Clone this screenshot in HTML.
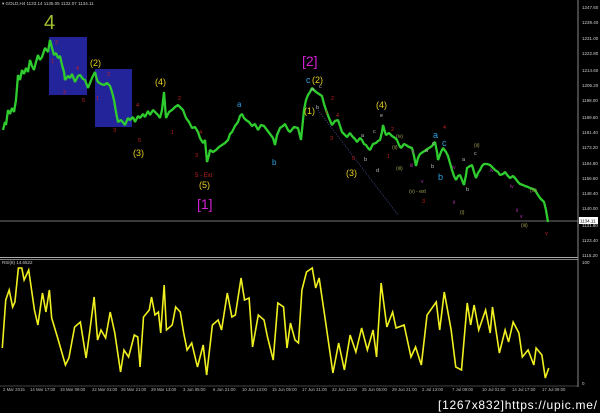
<!DOCTYPE html>
<html><head><meta charset="utf-8"><style>
html,body{margin:0;padding:0;background:#000;width:600px;height:413px;overflow:hidden}
svg{display:block}
text{font-family:"Liberation Sans",sans-serif}
</style></head><body>
<svg width="600" height="413" viewBox="0 0 600 413" xmlns="http://www.w3.org/2000/svg">
<rect width="600" height="413" fill="#000"/>
<rect x="49" y="37" width="38" height="58" fill="#23239a"/>
<rect x="95" y="69" width="37" height="58" fill="#23239a"/>
<line x1="578" y1="0" x2="578" y2="387" stroke="#aaa" stroke-width="0.8"/>
<line x1="0" y1="221" x2="578" y2="221" stroke="#999" stroke-width="0.8"/>
<line x1="0" y1="257.5" x2="578" y2="257.5" stroke="#aaa" stroke-width="1"/>
<line x1="0" y1="259.5" x2="578" y2="259.5" stroke="#aaa" stroke-width="0.8"/>
<line x1="0" y1="386" x2="578" y2="386" stroke="#888" stroke-width="0.6"/>
<g font-size="4.5" fill="#ccc">
<text x="2" y="5">▾ GOLD,H4  1133.14 1135.05 1132.07 1134.11</text>
<text x="582" y="9">1247.60</text><text x="582" y="24">1239.40</text><text x="582" y="40">1231.00</text>
<text x="582" y="55">1222.80</text><text x="582" y="72">1214.60</text><text x="582" y="87">1206.20</text>
<text x="582" y="102">1198.00</text><text x="582" y="119">1189.60</text><text x="582" y="134">1181.40</text>
<text x="582" y="149">1173.20</text><text x="582" y="165">1164.80</text><text x="582" y="180">1156.60</text>
<text x="582" y="195">1148.40</text><text x="582" y="210">1140.00</text><text x="582" y="227">1131.80</text>
<text x="582" y="242">1123.40</text><text x="582" y="257">1115.20</text>
<text x="582" y="264">100</text><text x="582" y="385">0</text>
<text x="2" y="264">RSI(8) 14.6522</text>
</g>
<rect x="579" y="217" width="19" height="7" fill="#fff"/>
<text x="580" y="222.5" font-size="4.5" fill="#000">1134.11</text>
<line x1="318" y1="110" x2="398" y2="215" stroke="#4a5aa0" stroke-width="0.8" stroke-dasharray="1,1.5"/>
<polyline fill="none" stroke="#2ecc2e" stroke-width="2.3" stroke-linejoin="bevel" points="3,130 5,122 6,125 8,110 10,114 12,108 14,112 16,100 18,75 20,80 22,70 24,74 26,68 28,72 30,60 32,66 34,70 36,62 38,55 40,60 42,57 45,48 48,52 50,40 52,48 54,55 56,53 58,58 60,56 62,65 64,72 65,80 68,76 70,78 72,74 75,82 78,76 80,75 83,79 85,80 88,88 92,78 95,72 97,80 98,82 101,84 104,85 107,83 110,86 112,92 114,100 116,112 118,122 121,120 125,125 128,118 130,120 133,117 135,122 138,116 140,118 143,114 145,117 148,111 150,115 153,110 155,112 158,115 160,118 162,110 164,92 165,105 166,118 169,112 172,110 175,107 178,105 181,108 183,110 186,118 189,122 192,128 195,127 198,132 200,138 203,143 205,140 207,162 209,155 210,150 213,152 216,150 219,147 222,145 225,143 228,140 230,134 232,132 235,126 238,122 240,116 242,114 244,118 246,120 249,122 252,126 255,124 258,130 261,125 264,126 267,130 270,134 273,138 275,145 277,135 280,128 283,126 285,124 288,130 290,132 294,127 298,128 300,136 301,140 303,120 304,110 306,100 308,95 310,92 312,88 314,90 316,92 319,94 322,96 324,104 326,110 329,118 332,125 335,121 338,120 340,126 342,132 345,135 347,137 350,133 352,136 355,139 357,142 360,138 362,140 364,144 366,145 368,148 370,150 373,144 376,143 378,141 380,140 382,132 383,125 385,132 386,135 389,133 392,136 395,138 397,140 399,145 401,148 404,144 406,145 409,147 412,148 414,156 416,166 418,158 420,154 423,152 426,150 429,148 432,146 434,143 435,142 437,152 438,160 441,152 443,148 446,152 448,156 450,163 452,170 454,176 456,180 458,176 460,175 462,180 464,185 466,175 467,168 470,166 472,165 474,172 476,178 478,173 480,170 482,166 484,164 487,164 490,165 493,168 495,170 498,172 500,175 503,174 505,172 508,176 510,178 513,176 515,178 518,182 520,184 523,185 525,186 528,187 530,188 533,189 535,190 538,195 540,198 542,200 544,202 546,210 548,222"/>
<g font-family="Liberation Sans,sans-serif">
<text x="44" y="29" font-size="20" fill="#a0c030">4</text>
<text x="90" y="66" font-size="9" fill="#e8d020">(2)</text>
<text x="155" y="85" font-size="9" fill="#e8d020">(4)</text>
<text x="133" y="156" font-size="9" fill="#e8d020">(3)</text>
<text x="199" y="188" font-size="9" fill="#e8d020">(5)</text>
<text x="195" y="177" font-size="6" fill="#c02020">5 - Ext</text>
<text x="197" y="209" font-size="14" fill="#d020d0">[1]</text>
<text x="237" y="107" font-size="8" fill="#30a0e0">a</text>
<text x="272" y="165" font-size="8" fill="#30a0e0">b</text>
<text x="302" y="66" font-size="14" fill="#d020d0">[2]</text>
<text x="306" y="83" font-size="9" fill="#30a0e0">c</text>
<text x="312" y="83" font-size="9" fill="#e8d020">(2)</text>
<text x="304" y="114" font-size="9" fill="#e8d020">(1)</text>
<text x="376" y="108" font-size="9" fill="#e8d020">(4)</text>
<text x="346" y="176" font-size="9" fill="#e8d020">(3)</text>
<text x="433" y="138" font-size="9" fill="#30a0e0">a</text>
<text x="442" y="146" font-size="9" fill="#30a0e0">c</text>
<text x="438" y="180" font-size="9" fill="#30a0e0">b</text>
<g font-size="5.5" fill="#c02020">
<text x="55" y="44">2</text><text x="51" y="63">1</text><text x="76" y="70">4</text><text x="63" y="94">3</text><text x="82" y="102">5</text>
<text x="107" y="76">2</text><text x="96" y="100">1</text><text x="113" y="132">3</text><text x="136" y="107">4</text><text x="138" y="142">5</text>
<text x="178" y="100">2</text><text x="171" y="134">1</text><text x="199" y="134">4</text><text x="195" y="157">3</text>
<text x="331" y="100">2</text><text x="325" y="114">1</text><text x="336" y="117">4</text><text x="330" y="140">3</text><text x="352" y="160">5</text>
<text x="391" y="131">2</text><text x="387" y="158">1</text><text x="422" y="203">3</text><text x="443" y="129">4</text><text x="545" y="235">v</text>
</g>
<g font-size="5.5" fill="#bbb">
<text x="311" y="91">a</text><text x="319" y="88">c</text><text x="316" y="109">b</text><text x="361" y="137">a</text><text x="373" y="133">c</text>
<text x="364" y="161">b</text><text x="376" y="172">d</text><text x="380" y="117">e</text><text x="425" y="152">a</text><text x="432" y="145">c</text>
<text x="431" y="168">b</text><text x="462" y="161">a</text><text x="474" y="155">c</text><text x="466" y="191">b</text>
</g>
<g font-size="5" fill="#a0a050">
<text x="396" y="138">(iv)</text><text x="392" y="149">(ii)</text><text x="396" y="170">(iii)</text><text x="409" y="193">(v) - ext</text>
<text x="474" y="147">(ii)</text><text x="460" y="214">(i)</text><text x="521" y="227">(iii)</text><text x="530" y="192">(iv)</text>
</g>
<g font-size="5" fill="#b030b0">
<text x="412" y="153">v</text><text x="410" y="167">iii</text><text x="421" y="183">v</text><text x="452" y="169">iv</text><text x="453" y="204">ii</text>
<text x="490" y="172">iv</text><text x="510" y="188">iv</text><text x="516" y="212">ii</text><text x="520" y="218">v</text>
</g>
</g>
<polyline fill="none" stroke="#f0f020" stroke-width="1.6" vector-effect="non-scaling-stroke" transform="scale(1.148,1)" points="2,348 5,300 8,290 11,307 13,302 16,268 19,268 21,280 25,270 30,310 33,325 37,293 40,312 43,290 45,318 50,337 57,365 60,358 65,327 70,322 75,358 78,333 82,297 85,340 88,330 92,338 96,312 100,333 105,372 108,350 112,357 117,335 120,337 122,367 125,317 130,310 132,297 135,315 138,312 140,333 143,285 145,330 150,325 153,307 157,312 160,333 163,350 167,343 172,367 177,345 180,375 185,325 190,320 193,330 198,293 202,317 205,315 210,278 213,300 217,298 220,347 225,315 230,320 233,337 238,360 242,303 247,307 250,348 253,323 257,340 260,343 263,290 267,272 272,268 275,288 278,278 283,317 290,373 295,343 300,370 305,335 310,352 315,328 320,350 325,330 328,357 332,283 337,327 342,312 345,328 352,325 358,357 362,347 367,365 372,315 380,302 383,330 387,292 393,330 397,367 402,370 407,303 410,325 413,305 417,330 423,310 427,333 429,307 435,353 440,330 443,342 447,322 452,333 455,357 460,350 465,365 467,348 472,355 475,378 478,368"/>
<g font-size="4.3" fill="#bbb">
<text x="3" y="391">2 Mar 2015</text><text x="30" y="391">14 Mar 17:00</text><text x="60" y="391">19 Mar 09:00</text>
<text x="92" y="391">22 Mar 01:00</text><text x="121" y="391">26 Mar 21:00</text><text x="151" y="391">29 Mar 13:00</text>
<text x="183" y="391">3 Jun 05:00</text><text x="213" y="391">6 Jun 21:00</text><text x="242" y="391">10 Jun 13:00</text>
<text x="272" y="391">15 Jun 05:00</text><text x="302" y="391">17 Jun 21:00</text><text x="332" y="391">22 Jun 13:00</text>
<text x="362" y="391">25 Jun 05:00</text><text x="392" y="391">29 Jun 21:00</text><text x="422" y="391">2 Jul 13:00</text>
<text x="452" y="391">7 Jul 09:00</text><text x="482" y="391">10 Jul 01:00</text><text x="512" y="391">14 Jul 17:00</text>
<text x="542" y="391">17 Jul 09:00</text>
</g>
<text x="438" y="409" font-size="12" fill="#fff" font-family="Liberation Mono,monospace" textLength="159">[1267x832]https://upic.me/</text>
</svg>
</body></html>
